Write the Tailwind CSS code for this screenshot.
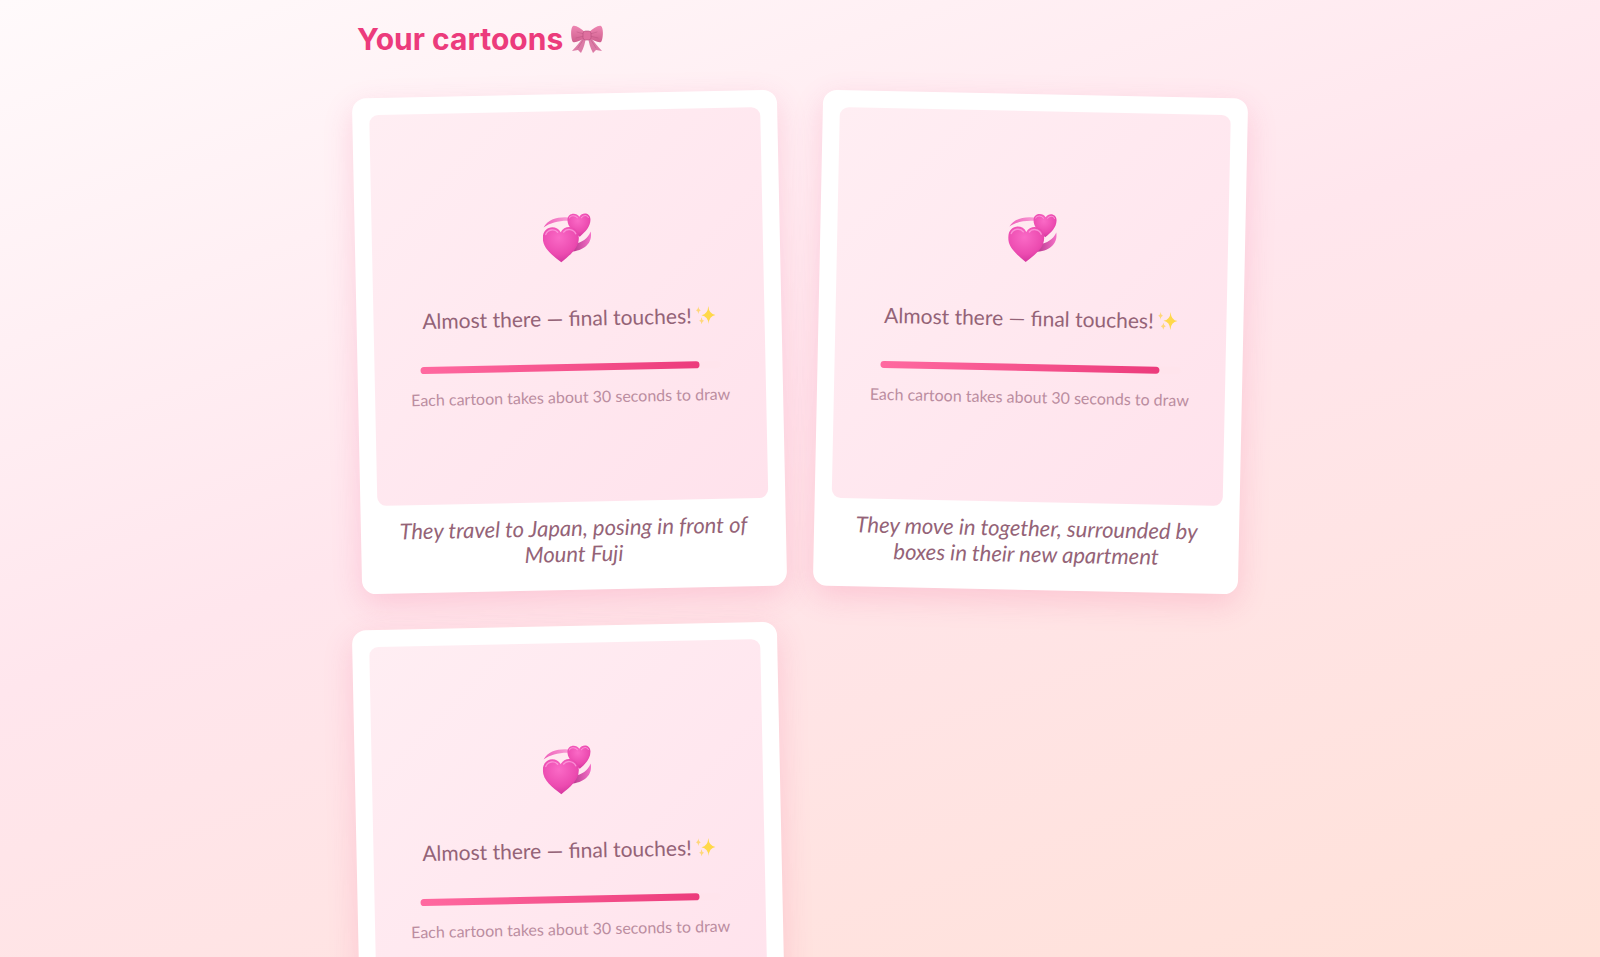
<!DOCTYPE html>
<html lang="en">
<head>
    <meta charset="UTF-8">
    <meta name="viewport" content="width=device-width, initial-scale=1.0">
    <title>Your cartoons</title>
    <script src="https://cdn.jsdelivr.net/npm/@tailwindcss/browser@4"></script>
</head>
<body class="min-h-screen overflow-x-hidden bg-[linear-gradient(160deg,#fffafb_0%,#ffe6ed_45%,#ffe1d8_100%)] bg-fixed font-['Lato',sans-serif] text-[#946377]">

    <!-- shared emoji drawings -->
    <svg class="absolute size-0" aria-hidden="true">
        <defs>
            <radialGradient id="heart-fill" cx="0.45" cy="0.3" r="0.8">
                <stop offset="0" stop-color="#fa6ac6"/>
                <stop offset="0.6" stop-color="#ec4bb0"/>
                <stop offset="1" stop-color="#cb2d97"/>
            </radialGradient>
            <linearGradient id="ribbon-top" x1="0" y1="0" x2="1" y2="0">
                <stop offset="0" stop-color="#ee5fb9"/>
                <stop offset="1" stop-color="#fba6da"/>
            </linearGradient>
            <linearGradient id="ribbon-low" x1="0" y1="0" x2="1" y2="0">
                <stop offset="0" stop-color="#b03287"/>
                <stop offset="1" stop-color="#f571c8"/>
            </linearGradient>
            <linearGradient id="bow-fill" x1="0" y1="0" x2="0" y2="1">
                <stop offset="0" stop-color="#ee86b2"/>
                <stop offset="1" stop-color="#cf5f8e"/>
            </linearGradient>
            <symbol id="hearts" viewBox="0 0 50 50">
                <path d="M1 14C6 5 18 3 30 5L29 8C18 7 8 9 1 14Z" fill="url(#ribbon-top)"/>
                <path d="M48 19C50 31 41 38 27 39L31 31C39 30 45 26 48 19Z" fill="url(#ribbon-low)"/>
                <path d="M37 24C31 19 25 14 25 7C25 0 34 -1 37 4C40 -1 48 0 48 7C48 14 43 19 37 24Z" fill="url(#heart-fill)"/>
                <path d="M27 5C28 2 33 2 35 5M39 5C41 2 45 2 46 5" fill="none" stroke="#ffa8e2" stroke-width="1" stroke-linecap="round" opacity="0.7"/>
                <path d="M18 49C9 42 0 35 0 25C0 12 14 11 18 19C22 11 36 12 36 25C36 35 27 42 18 49Z" fill="url(#heart-fill)"/>
                <path d="M3 21C5 16 12 15 15 19M21 19C24 15 31 16 33 21" fill="none" stroke="#ffa8e2" stroke-width="1.4" stroke-linecap="round" opacity="0.7"/>
            </symbol>
            <symbol id="sparkles" viewBox="0 0 20 20">
                <path d="M13 1Q13.500 9 20 10Q13.500 11 13 19Q12.500 11 6 10Q12.500 9 13 1Z" fill="#ffd84a"/>
                <path d="M3 1Q3.300 4.500 5.500 5Q3.300 5.500 3 9Q2.700 5.500 0.500 5Q2.700 4.500 3 1Z" fill="#ffd77a"/>
                <path d="M6 12Q6.300 15 8.500 15.500Q6.300 16 6 19Q5.700 16 3.500 15.500Q5.700 15 6 12Z" fill="#ffd77a"/>
            </symbol>
            <symbol id="bow" viewBox="0 0 32 28">
                <path d="M13 12C9 16 6 21 1 26L7 25L10 28C13 23 14 17 15 13Z" fill="#dc7ba6"/>
                <path d="M19 12C23 16 26 21 31 26L25 25L22 28C19 23 18 17 17 13Z" fill="#dc7ba6"/>
                <path d="M14 7C10 4 5 0 2 1C-1 3 0 15 2 17C5 18 10 15 14 13Z" fill="url(#bow-fill)"/>
                <path d="M18 7C22 4 27 0 30 1C33 3 32 15 30 17C27 18 22 15 18 13Z" fill="url(#bow-fill)"/>
                <path d="M13 9L6 7M13 11L5 13M19 9L26 7M19 11L27 13M12 15L7 23M20 15L25 23" fill="none" stroke="#a94470" stroke-width="0.8" stroke-linecap="round" opacity="0.4"/>
                <rect x="12" y="6" width="8" height="9" rx="2.500" fill="#df709f" stroke="#b64e7c" stroke-width="0.6"/>
            </symbol>
        </defs>
    </svg>

    <main class="mx-auto max-w-[886px] pt-[17px] pb-16">
        <h1 class="flex items-center gap-2 font-['Inter',sans-serif] text-[30px] leading-11 font-bold text-[#ec3b7c]">
            Your cartoons
            <svg class="h-7 w-8" role="img" aria-label="ribbon"><use href="#bow"/></svg>
        </h1>

        <div class="mt-[33px] grid grid-cols-2 gap-9">
            <figure class="-rotate-[1.2deg] rounded-[14px] bg-white p-[17px] pb-[23px] shadow-[0_10px_30px_rgba(236,59,124,0.18)]">
                <div class="flex aspect-square flex-col items-center justify-center rounded-[9px] bg-linear-to-br from-[#ffeef3] to-[#ffe2ec] pt-2">
                    <svg class="size-[50px]" role="img" aria-label="hearts"><use href="#hearts"/></svg>
                    <p class="mt-[39px] flex items-center gap-1 text-[21px] leading-8">Almost there — final touches! <svg class="size-5" aria-hidden="true"><use href="#sparkles"/></svg></p>
                    <div class="mt-[30px] h-[7px] w-[300px] rounded-full bg-[#ffe4ec]">
                        <div class="h-full rounded-full bg-linear-to-r from-[#ff69a0] to-[#ec3b7c]" style="width: 93%"></div>
                    </div>
                    <p class="mt-[14px] text-base leading-6 text-[#bb8da0]">Each cartoon takes about 30 seconds to draw</p>
                </div>
                <figcaption class="mt-[13px] px-4 text-center text-[22px] leading-[26px] italic">They travel to Japan, posing in front of Mount Fuji</figcaption>
            </figure>

            <figure class="rotate-[1.2deg] rounded-[14px] bg-white p-[17px] pb-[23px] shadow-[0_10px_30px_rgba(236,59,124,0.18)]">
                <div class="flex aspect-square flex-col items-center justify-center rounded-[9px] bg-linear-to-br from-[#ffeef3] to-[#ffe2ec] pt-2">
                    <svg class="size-[50px]" role="img" aria-label="hearts"><use href="#hearts"/></svg>
                    <p class="mt-[39px] flex items-center gap-1 text-[21px] leading-8">Almost there — final touches! <svg class="size-5" aria-hidden="true"><use href="#sparkles"/></svg></p>
                    <div class="mt-[30px] h-[7px] w-[300px] rounded-full bg-[#ffe4ec]">
                        <div class="h-full rounded-full bg-linear-to-r from-[#ff69a0] to-[#ec3b7c]" style="width: 93%"></div>
                    </div>
                    <p class="mt-[14px] text-base leading-6 text-[#bb8da0]">Each cartoon takes about 30 seconds to draw</p>
                </div>
                <figcaption class="mt-[13px] px-4 text-center text-[22px] leading-[26px] italic">They move in together, surrounded by boxes in their new apartment</figcaption>
            </figure>

            <figure class="-rotate-[1.2deg] rounded-[14px] bg-white p-[17px] pb-[23px] shadow-[0_10px_30px_rgba(236,59,124,0.18)]">
                <div class="flex aspect-square flex-col items-center justify-center rounded-[9px] bg-linear-to-br from-[#ffeef3] to-[#ffe2ec] pt-2">
                    <svg class="size-[50px]" role="img" aria-label="hearts"><use href="#hearts"/></svg>
                    <p class="mt-[39px] flex items-center gap-1 text-[21px] leading-8">Almost there — final touches! <svg class="size-5" aria-hidden="true"><use href="#sparkles"/></svg></p>
                    <div class="mt-[30px] h-[7px] w-[300px] rounded-full bg-[#ffe4ec]">
                        <div class="h-full rounded-full bg-linear-to-r from-[#ff69a0] to-[#ec3b7c]" style="width: 93%"></div>
                    </div>
                    <p class="mt-[14px] text-base leading-6 text-[#bb8da0]">Each cartoon takes about 30 seconds to draw</p>
                </div>
                <figcaption class="mt-[13px] min-h-[52px] px-4"></figcaption>
            </figure>
        </div>
    </main>

</body>
</html>
